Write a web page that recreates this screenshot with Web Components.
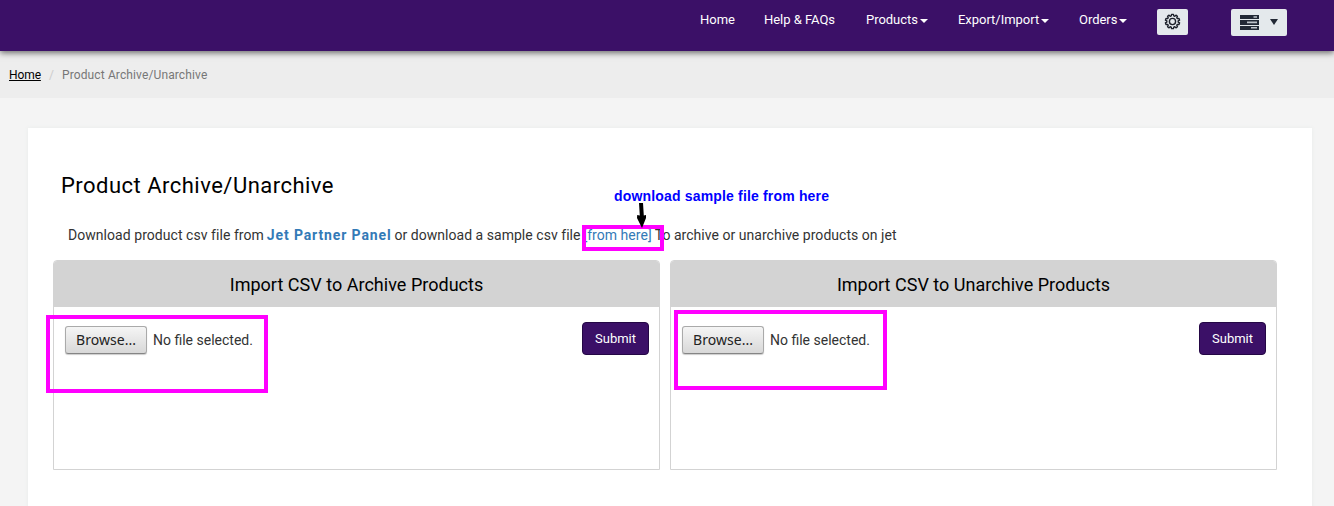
<!DOCTYPE html>
<html lang="en"><head><meta charset="utf-8"><title>Product Archive/Unarchive</title>
<style>html,body{margin:0;height:506px;overflow:hidden;background:#f4f4f4;font-family:Roboto,sans-serif}</style></head>
<body><archive-page></archive-page>
<script>
function define(name, html){
  const t=document.createElement('template'); t.innerHTML=html;
  customElements.define(name, class extends HTMLElement{
    constructor(){super();this.attachShadow({mode:'open'}).append(t.content.cloneNode(true));}
  });
}
define('nav-link', `<style>
:host{display:flex;align-items:center;height:18px;color:#fff;font:13px/18px Roboto,sans-serif;white-space:nowrap;letter-spacing:-.03px}
i{display:none;border:4px solid transparent;border-top-color:#fff;border-bottom:0;margin:2px 0 0 2px}
:host([menu]) i{display:block}
</style><slot></slot><i></i>`);
define('icon-button', `<style>
:host{display:flex;align-items:center;box-sizing:border-box;background:#e4e9ec;border-radius:2px;color:#222936}
</style><slot></slot>`);
define('gear-icon', `<style>:host{display:block;width:17px;height:17px;margin-top:-1px}svg{display:block}</style>
<svg width="17" height="17" viewBox="-8.5 -8.5 17 17" fill="none" stroke="#1d222b" stroke-width="1.4" stroke-linejoin="round"><path id="g"/><circle r="3.1"/></svg>`);
define('server-icon', `<style>:host{display:block}svg{display:block}</style>
<svg width="19" height="15" viewBox="0 0 19 15"><path fill="#222936" d="M0 0h19v4H0zM0 5h19v5H0zM0 11h19v4H0z"/><path fill="#bdc3ca" d="M13.500 1.200H17v1.600h-3.500zM7 6.500h10v1.700H7zM11 12h6v1.600h-6z"/></svg>`);
define('top-bar', `<style>
:host{display:grid;grid-template-columns:64px 102px 92px 121px 78px 74px 56px;box-sizing:border-box;height:51px;padding:9px 0 0 700px;background:#3b1067;box-shadow:0 2px 6px rgba(0,0,0,.55);position:relative;z-index:1;align-items:start}
nav-link{margin-top:2px}
icon-button{width:31px;height:26px;justify-content:center}
.srv{width:56px;height:27px;padding-left:9px;justify-content:flex-start}
.tri{margin:-1px 0 0 11px;border:4px solid transparent;border-top:6px solid #222936;border-bottom:0}
</style><nav-link>Home</nav-link><nav-link>Help &amp; FAQs</nav-link><nav-link menu>Products</nav-link><nav-link menu>Export/Import</nav-link><nav-link menu>Orders</nav-link><icon-button><gear-icon></gear-icon></icon-button><icon-button class="srv"><server-icon></server-icon><span class="tri"></span></icon-button>`);
define('bread-crumb', `<style>
:host{display:flex;box-sizing:border-box;height:47px;padding:16px 0 0 9px;background:#ededed;font:12px/17px Roboto,sans-serif;color:#777;white-space:nowrap}
a{color:#000;text-decoration:underline;width:32px;letter-spacing:-.1px}i{font-style:normal;color:#ccc;width:21px;text-indent:8px}
span{letter-spacing:.12px}
</style><a>Home</a><i>/</i><span>Product Archive/Unarchive</span>`);
define('import-panel', `<style>
:host{display:block;box-sizing:border-box;width:607px;height:210px;border:1px solid #d3d3d3;border-radius:4px 4px 0 0;overflow:hidden}
h2{margin:0;height:46px;background:#d3d3d3;text-align:center;font:400 18px/47px Roboto,sans-serif;color:#000;letter-spacing:.02px}
.row{display:flex;padding:15px 10px 0 11px;align-items:flex-start}
.browse{box-sizing:border-box;width:82px;height:28px;margin-top:4px;border:1px solid #aaa;border-bottom-color:#858585;border-radius:3px;background:linear-gradient(#f5f5f5,#d8d8d8);box-shadow:0 1px 1px #ccc;font:14px/26px "Noto Sans",sans-serif;color:#222;padding-left:10px;letter-spacing:.04px}
.file{margin:9px 0 0 6px;font:14px/18px Roboto,sans-serif;color:#333;white-space:nowrap}
.submit{box-sizing:border-box;width:67px;height:33px;margin-left:auto;border:1px solid #240745;border-radius:4px;background:#3b1067;color:#fff;text-align:center;font:13px/31px Roboto,sans-serif}
</style><h2><slot></slot></h2><div class="row"><div class="browse">Browse...</div><span class="file">No file selected.</span><div class="submit">Submit</div></div>`);
define('mark-box', `<style>:host{display:block;position:absolute;box-sizing:border-box;border:4px solid #f0f;z-index:3}</style>`);
define('note-arrow', `<style>:host{display:block;position:absolute;z-index:4;left:614px;top:188px;font:bold 14px/16px "Liberation Sans",sans-serif;letter-spacing:.17px;color:#00f;white-space:nowrap}svg{position:absolute;left:22px;top:15px}</style>
<slot></slot><svg width="11" height="26"><path d="M3 0h4l.8 12.500 2.200-.500v3l-4 10-5-10 .2-3 2.600.5z" fill="#000"/></svg>`);
define('archive-page', `<style>
:host{display:block;position:relative;width:1334px;height:506px;overflow:hidden}
main{box-sizing:border-box;width:1284px;height:420px;margin:30px 0 0 28px;padding:43px 25px 0;background:#fff;box-shadow:0 0 4px #e8eceb}
h1{margin:0 0 0 8px;font:400 22px/29px Roboto,sans-serif;color:#000;letter-spacing:.48px}
p{margin:24px 0 0 15px;height:36px;font:14px/22px Roboto,sans-serif;letter-spacing:.035px;color:#333;white-space:nowrap;display:flex;gap:3px}
p span:first-child{letter-spacing:.05px}
b,a{color:#337ab7}b{letter-spacing:.87px;font-weight:700}
.panels{display:flex;gap:10px}
</style><top-bar></top-bar><bread-crumb></bread-crumb><main><h1>Product Archive/Unarchive</h1>
<p><span>Download product csv file from</span><b>Jet Partner Panel</b><span>or download a sample csv file</span><a>[from here]</a><span>To archive or unarchive products on jet</span></p>
<div class="panels"><import-panel>Import CSV to Archive Products</import-panel><import-panel>Import CSV to Unarchive Products</import-panel></div></main>
<mark-box style="left:582px;top:225px;width:82px;height:26px"></mark-box>
<mark-box style="left:46px;top:315px;width:222px;height:78px"></mark-box>
<mark-box style="left:674px;top:310px;width:213px;height:80px"></mark-box>
<note-arrow>download sample file from here</note-arrow>`);
const bar=document.querySelector('archive-page').shadowRoot.querySelector('top-bar').shadowRoot;
let d='';
for(let i=0;i<10;i++){
  [[-.22,5.7],[-.13,7.2],[.13,7.2],[.22,5.7]].forEach(([a,r],k)=>{
    const t=i*Math.PI/5-Math.PI/2+a;
    d+=(i||k?'L':'M')+(r*Math.cos(t)).toFixed(2)+' '+(r*Math.sin(t)).toFixed(2);
  });
}
bar.querySelector('gear-icon').shadowRoot.querySelector('path').setAttribute('d',d+'Z');
</script></body></html>
